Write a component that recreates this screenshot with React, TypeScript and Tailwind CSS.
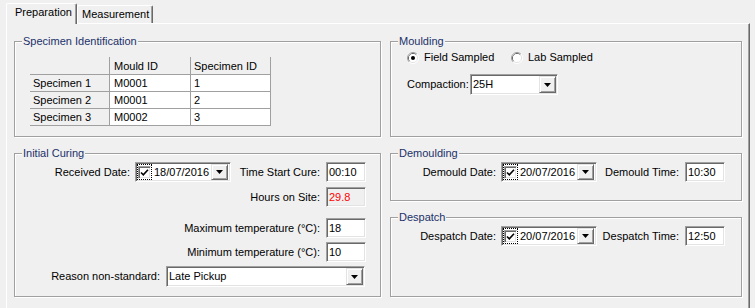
import React from "react";

const sunken =
  "border border-t-[#a0a0a0] border-l-[#a0a0a0] border-r-white border-b-white shadow-[inset_1px_1px_0_#696969,inset_-1px_-1px_0_#e3e3e3]";
const raised =
  "border border-t-[#e3e3e3] border-l-[#e3e3e3] border-r-[#696969] border-b-[#696969] shadow-[inset_1px_1px_0_#ffffff,inset_-1px_-1px_0_#a0a0a0]";

function Group({ title, className, children }: { title: string; className: string; children?: React.ReactNode }) {
  return (
    <div className={`relative border border-[#a0a0a0] shadow-[inset_1px_1px_0_#ffffff,1px_1px_0_#ffffff] ${className}`}>
      <span className="absolute -top-[7px] left-[7px] bg-[#f0f0f0] px-px text-[#22306a]">{title}</span>
      {children}
    </div>
  );
}

function Arrow() {
  return (
    <svg width="7" height="4" viewBox="0 0 7 4">
      <polygon points="0,0 7,0 3.5,4" fill="#000" />
    </svg>
  );
}

function DropButton({ h = 17 }: { h?: number }) {
  return (
    <div className={`ml-auto flex w-[17px] items-center justify-center bg-[#f0f0f0] ${h === 17 ? "h-[17px]" : "h-[16px]"} ${raised}`}>
      <Arrow />
    </div>
  );
}

function Radio({ checked }: { checked?: boolean }) {
  return (
    <svg width="12" height="12" viewBox="0 0 12 12" className="shrink-0">
      <path d="M2.11 9.89 A5.5 5.5 0 0 1 9.89 2.11" fill="none" stroke="#a0a0a0" />
      <path d="M9.89 2.11 A5.5 5.5 0 0 1 2.11 9.89" fill="none" stroke="#ffffff" />
      <path d="M2.82 9.18 A4.5 4.5 0 0 1 9.18 2.82" fill="none" stroke="#696969" />
      <path d="M9.18 2.82 A4.5 4.5 0 0 1 2.82 9.18" fill="none" stroke="#e3e3e3" />
      <circle cx="6" cy="6" r="4" fill="#ffffff" />
      {checked && <circle cx="6" cy="6" r="2" fill="#000" />}
    </svg>
  );
}

function TextBox({ value, readOnly }: { value: string; readOnly?: boolean }) {
  return (
    <div
      className={`ml-[6px] flex h-[20px] w-[40px] items-center pl-[2px] ${sunken} ${
        readOnly ? "bg-[#f0f0f0] text-[#ff0000]" : "bg-white"
      }`}
    >
      {value}
    </div>
  );
}

function DatePicker({ value }: { value: string }) {
  return (
    <div className={`ml-[5px] flex h-[20px] w-[96px] items-center bg-white pl-px pr-[2px] ${sunken}`}>
      <div className="flex h-[16px] w-[15px] items-center justify-center border border-dotted border-black">
        <div className={`flex h-[13px] w-[13px] items-center justify-center bg-white ${sunken}`}>
          <svg width="9" height="9" viewBox="0 0 9 9">
            <path d="M1 4.5 L3.3 6.8 L8 1.8" fill="none" stroke="#000" strokeWidth="1.6" />
          </svg>
        </div>
      </div>
      <span className="ml-[2px]">{value}</span>
      <DropButton h={16} />
    </div>
  );
}

function Combo({ value, w }: { value: string; w: string }) {
  return (
    <div className={`flex h-[21px] items-center bg-white pl-px pr-px ${w} ${sunken}`}>
      <span className="pl-px">{value}</span>
      <DropButton />
    </div>
  );
}

const specimens = [
  ["Specimen 1", "M0001", "1"],
  ["Specimen 2", "M0001", "2"],
  ["Specimen 3", "M0002", "3"],
];

const cell = "h-[17px] border-b border-r border-[#a0a0a0] pt-[2px]";

export default function App() {
  return (
    <div className="h-[308px] w-[755px] overflow-hidden bg-[#f0f0f0] font-['Liberation_Sans',Arial,sans-serif] text-[11px] leading-[13px] text-black">
      <div className="flex h-[23px] items-end pl-[6px]">
        <div className="relative z-10 -mb-px h-[21px] w-[71px] rounded-t-[2px] border-l border-r border-t border-l-white border-r-[#696969] border-t-white bg-[#f0f0f0] pl-[8px] pt-[2px] shadow-[inset_-1px_0_0_#a0a0a0]">
          Preparation
        </div>
        <div className="h-[18px] w-[76px] rounded-t-[2px] border-l border-r border-t border-l-white border-r-[#696969] border-t-white pl-[4px] pt-[2px] shadow-[inset_-1px_0_0_#a0a0a0]">
          Measurement
        </div>
      </div>

      <div className="ml-[6px] h-[300px] w-[744px] border-l border-r border-t border-l-white border-r-[#696969] border-t-white px-[7px] pt-[17px] shadow-[inset_-1px_0_0_#a0a0a0]">
        <div className="flex gap-[9px]">
          <div className="flex w-[367px] flex-col gap-[16px]">
            <Group title="Specimen Identification" className="h-[96px] pl-[15px] pt-[15px]">
              <div className="grid w-[241px] grid-cols-[80px_81px_80px]">
                <div className="h-[18px] border-b border-r border-[#a0a0a0]" />
                <div className="h-[18px] border-b border-r border-[#a0a0a0] pl-[4px] pt-[3px]">Mould ID</div>
                <div className="h-[18px] border-b border-r border-[#a0a0a0] pl-[3px] pt-[3px]">Specimen ID</div>
                {specimens.map(([name, mould, id]) => (
                  <React.Fragment key={name}>
                    <div className={`${cell} pl-[3px]`}>{name}</div>
                    <div className={`${cell} bg-white pl-[4px]`}>{mould}</div>
                    <div className={`${cell} bg-white pl-[3px]`}>{id}</div>
                  </React.Fragment>
                ))}
              </div>
            </Group>

            <Group title="Initial Curing" className="h-[144px] pt-[8px]">
              <div className="flex h-[20px] items-center">
                <span className="w-[115px] text-right">Received Date:</span>
                <DatePicker value="18/07/2016" />
                <span className="w-[89px] text-right">Time Start Cure:</span>
                <TextBox value="00:10" />
              </div>
              <div className="mt-[5px] flex h-[20px] items-center">
                <span className="w-[305px] text-right">Hours on Site:</span>
                <TextBox value="29.8" readOnly />
              </div>
              <div className="mt-[11px] flex h-[20px] items-center">
                <span className="w-[305px] text-right">Maximum temperature (°C):</span>
                <TextBox value="18" />
              </div>
              <div className="mt-[4px] flex h-[20px] items-center">
                <span className="w-[305px] text-right">Minimum temperature (°C):</span>
                <TextBox value="10" />
              </div>
              <div className="mt-[4px] flex h-[21px] items-center">
                <span className="mr-[6px] w-[145px] text-right">Reason non-standard:</span>
                <Combo value="Late Pickup" w="w-[199px]" />
              </div>
            </Group>
          </div>

          <div className="flex w-[352px] flex-col gap-[16px]">
            <Group title="Moulding" className="h-[96px] pl-[16px] pt-[9px]">
              <div className="flex h-[13px] items-center">
                <div className="flex w-[104px] items-center">
                  <Radio checked />
                  <span className="ml-[5px]">Field Sampled</span>
                </div>
                <Radio />
                <span className="ml-[5px]">Lab Sampled</span>
              </div>
              <div className="mt-[10px] flex h-[21px] items-center">
                <span className="w-[63px]">Compaction:</span>
                <Combo value="25H" w="w-[88px]" />
              </div>
            </Group>

            <Group title="Demoulding" className="h-[48px] pt-[8px]">
              <div className="flex h-[20px] items-center">
                <span className="w-[105px] text-right">Demould Date:</span>
                <DatePicker value="20/07/2016" />
                <span className="w-[82px] text-right">Demould Time:</span>
                <TextBox value="10:30" />
              </div>
            </Group>

            <Group title="Despatch" className="h-[80px] pt-[8px]">
              <div className="flex h-[20px] items-center">
                <span className="w-[105px] text-right">Despatch Date:</span>
                <DatePicker value="20/07/2016" />
                <span className="w-[82px] text-right">Despatch Time:</span>
                <TextBox value="12:50" />
              </div>
            </Group>
          </div>
        </div>
      </div>
    </div>
  );
}
